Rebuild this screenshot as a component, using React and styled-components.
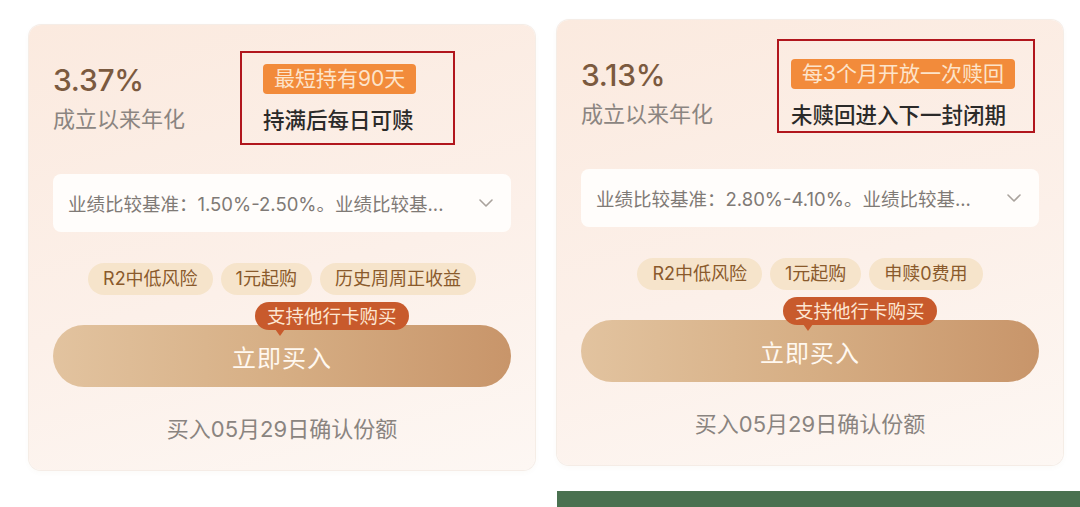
import React from "react"
import styled, { createGlobalStyle } from "styled-components"

const GlobalStyle = createGlobalStyle`
  body {
    margin: 0;
    background: #ffffff;
    font-family: Inter, "Noto Sans CJK SC", sans-serif;
  }
`

const products = [
    {
        rate: "3.37%",
        badge: "最短持有90天",
        note: "持满后每日可赎",
        benchmark: "业绩比较基准：1.50%-2.50%。业绩比较基...",
        tags: ["R2中低风险", "1元起购", "历史周周正收益"],
        mark: { top: -13, left: -23, width: 215, height: 94 },
    },
    {
        rate: "3.13%",
        badge: "每3个月开放一次赎回",
        note: "未赎回进入下一封闭期",
        benchmark: "业绩比较基准：2.80%-4.10%。业绩比较基...",
        tags: ["R2中低风险", "1元起购", "申赎0费用"],
        mark: { top: -20, left: -14, width: 258, height: 94 },
    },
]

function Chevron() {
    return (
        <svg width="14" height="8" viewBox="0 0 14 8">
            <polyline points="1,1 7,7 13,1" fill="none" stroke="#a9a29c" strokeWidth="1.6" strokeLinecap="round" strokeLinejoin="round" />
        </svg>
    )
}

function ProductCard({ product, offset }) {
    const { rate, badge, note, benchmark, tags, mark } = product
    return (
        <Card $offset={offset}>
            <TopRow>
                <RateBlock>
                    <RateValue>{rate}</RateValue>
                    <RateCaption>成立以来年化</RateCaption>
                </RateBlock>
                <LabelGroup>
                    <Badge>{badge}</Badge>
                    <Note>{note}</Note>
                    <Mark $top={mark.top} $left={mark.left} $width={mark.width} $height={mark.height} />
                </LabelGroup>
            </TopRow>
            <InfoBox>
                <InfoText>{benchmark}</InfoText>
                <Chevron />
            </InfoBox>
            <ChipRow>
                {tags.map((t) => (
                    <Chip key={t}>{t}</Chip>
                ))}
            </ChipRow>
            <ButtonWrap>
                <Tooltip>支持他行卡购买</Tooltip>
                <BuyButton>立即买入</BuyButton>
            </ButtonWrap>
            <Footer>买入05月29日确认份额</Footer>
        </Card>
    )
}

export default function App() {
    return (
        <>
            <GlobalStyle />
            <Page>
                <ProductCard product={products[0]} offset={5} />
                <RightColumn>
                    <ProductCard product={products[1]} offset={0} />
                    <GreenBar />
                </RightColumn>
            </Page>
        </>
    )
}

const Page = styled.div`
    display: flex;
    align-items: flex-start;
    gap: 22px;
    width: 1080px;
    height: 507px;
    padding: 20px 0 0 29px;
    box-sizing: border-box;
    overflow: hidden;
`

const RightColumn = styled.div`
    display: flex;
    flex-direction: column;
    width: 523px;
`

const Card = styled.div`
    display: flex;
    flex-direction: column;
    width: 506px;
    height: 445px;
    margin-top: ${(p) => p.$offset}px;
    padding: 0 24px;
    box-sizing: border-box;
    border-radius: 12px;
    background: linear-gradient(165deg, #fbeadf 0%, #fcf0e9 55%, #fdf7f3 100%);
    box-shadow: 0 0 0 1px rgba(242, 232, 225, 0.8), 0 2px 6px rgba(120, 90, 60, 0.04);
`

const TopRow = styled.div`
    display: grid;
    grid-template-columns: 210px 1fr;
    padding-top: 37px;
`

const RateBlock = styled.div`
    display: flex;
    flex-direction: column;
`

const RateValue = styled.div`
    font-family: Inter, sans-serif;
    font-size: 30px;
    line-height: 36px;
    font-weight: 500;
    color: #7b5a3f;
    letter-spacing: -0.3px;
`

const RateCaption = styled.div`
    margin-top: 6px;
    font-size: 22px;
    line-height: 30px;
    color: #8b8581;
`

const LabelGroup = styled.div`
    position: relative;
    display: flex;
    flex-direction: column;
    align-items: flex-start;
    margin-top: 2px;
`

const Badge = styled.span`
    height: 30px;
    padding: 0 11px;
    border-radius: 4px;
    background: #f28b3b;
    color: #fde4ca;
    font-size: 21px;
    line-height: 30px;
    white-space: nowrap;
`

const Note = styled.div`
    margin-top: 11px;
    font-size: 21.5px;
    line-height: 30px;
    font-weight: 500;
    color: #2b2a29;
    white-space: nowrap;
`

const Mark = styled.div`
    position: absolute;
    top: ${(p) => p.$top}px;
    left: ${(p) => p.$left}px;
    width: ${(p) => p.$width}px;
    height: ${(p) => p.$height}px;
    border: 2px solid #b1161d;
    box-sizing: border-box;
    pointer-events: none;
`

const InfoBox = styled.div`
    display: flex;
    align-items: center;
    justify-content: space-between;
    height: 58px;
    margin-top: 39px;
    padding: 0 18px 0 15px;
    border-radius: 8px;
    background: #fffdfb;
`

const InfoText = styled.span`
    font-size: 18.5px;
    color: #7f7a76;
    white-space: nowrap;
    overflow: hidden;
`

const ChipRow = styled.div`
    display: flex;
    justify-content: center;
    gap: 8px;
    margin-top: 31px;
`

const Chip = styled.span`
    height: 32px;
    padding: 0 15px;
    border-radius: 16px;
    background: #f6e4cb;
    color: #8a5a2c;
    font-size: 18px;
    line-height: 32px;
    white-space: nowrap;
`

const ButtonWrap = styled.div`
    position: relative;
    margin-top: 30px;
`

const BuyButton = styled.button`
    display: block;
    width: 100%;
    height: 62px;
    border: none;
    border-radius: 31px;
    background: linear-gradient(90deg, #e2c39f 0%, #d6ae84 50%, #c8956a 100%);
    color: #fff8f0;
    font-family: Inter, "Noto Sans CJK SC", sans-serif;
    font-size: 24px;
    letter-spacing: 1px;
`

const Tooltip = styled.div`
    position: absolute;
    z-index: 1;
    top: -23px;
    left: 202px;
    height: 28px;
    padding: 0 12px;
    border-radius: 14px;
    background: #c85a2c;
    color: #fde6d2;
    font-size: 18.5px;
    line-height: 28px;
    white-space: nowrap;

    &::after {
        content: "";
        position: absolute;
        left: 20px;
        bottom: -6px;
        border-left: 5px solid transparent;
        border-right: 5px solid transparent;
        border-top: 7px solid #c85a2c;
    }
`

const Footer = styled.div`
    margin-top: 27px;
    text-align: center;
    font-size: 22px;
    line-height: 30px;
    color: #8a8480;
`

const GreenBar = styled.div`
    height: 40px;
    margin-top: 26px;
    background: #4a7150;
`
